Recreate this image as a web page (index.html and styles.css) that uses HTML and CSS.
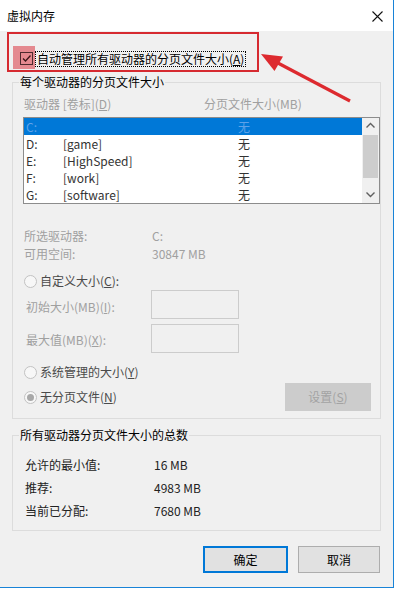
FILE: index.html
```html
<!DOCTYPE html>
<html lang="zh-CN">
<head>
<meta charset="utf-8">
<title>虚拟内存</title>
<link rel="stylesheet" href="styles.css">
</head>
<body>
<div class="window">
  <div class="titlebar">
    <span class="title">虚拟内存</span>
    <svg class="close" width="11" height="11" viewBox="0 0 11 11"><path d="M0.5 0.5L10.5 10.5M10.5 0.5L0.5 10.5" stroke="#111" stroke-width="1.1" fill="none"/></svg>
  </div>
  <div class="content">
    <div class="auto-box">
      <span class="cb-highlight"><span class="checkbox"><svg width="11" height="11" viewBox="0 0 11 11"><path d="M2 5.5L4.5 8L9.5 2.5" stroke="#3a1517" stroke-width="1.3" fill="none"/></svg></span></span>
      <span class="focus-label">自动管理所有驱动器的分页文件大小(<u>A</u>)</span>
    </div>

    <fieldset class="group group-drives">
      <legend>每个驱动器的分页文件大小</legend>
      <div class="group-body">
        <div class="col-headers"><span class="col-drive">驱动器 [卷标](<u>D</u>)</span><span>分页文件大小(MB)</span></div>
        <div class="listbox">
          <div class="rows">
            <div class="row selected"><span class="c-drive">C:</span><span class="c-label"></span><span class="c-size">无</span></div>
            <div class="row"><span class="c-drive">D:</span><span class="c-label">[game]</span><span class="c-size">无</span></div>
            <div class="row"><span class="c-drive">E:</span><span class="c-label">[HighSpeed]</span><span class="c-size">无</span></div>
            <div class="row"><span class="c-drive">F:</span><span class="c-label">[work]</span><span class="c-size">无</span></div>
            <div class="row"><span class="c-drive">G:</span><span class="c-label">[software]</span><span class="c-size">无</span></div>
          </div>
          <div class="scrollbar">
            <svg class="sb-btn" width="17" height="17" viewBox="0 0 17 17"><path d="M4.5 9.5L8.5 5.5L12.5 9.5" stroke="#606060" stroke-width="1.4" fill="none"/></svg>
            <div class="sb-track"><div class="sb-thumb"></div></div>
            <svg class="sb-btn" width="17" height="17" viewBox="0 0 17 17"><path d="M4.5 6.5L8.5 10.5L12.5 6.5" stroke="#606060" stroke-width="1.4" fill="none"/></svg>
          </div>
        </div>

        <div class="info-row first"><span class="info-label">所选驱动器:</span><span>C:</span></div>
        <div class="info-row"><span class="info-label">可用空间:</span><span>30847 MB</span></div>

        <div class="radio-row r-custom"><span class="radio"></span><span class="radio-text">自定义大小(<u>C</u>):</span></div>
        <div class="field-row f-init"><span class="field-label">初始大小(MB)(<u>I</u>):</span><span class="textbox"></span></div>
        <div class="field-row f-max"><span class="field-label">最大值(MB)(<u>X</u>):</span><span class="textbox"></span></div>
        <div class="radio-row r-system"><span class="radio"></span><span class="radio-text">系统管理的大小(<u>Y</u>)</span></div>
        <div class="radio-row r-none"><span class="radio checked"></span><span class="radio-text">无分页文件(<u>N</u>)</span><span class="btn-set">设置(<u>S</u>)</span></div>
      </div>
    </fieldset>

    <fieldset class="group group-total">
      <legend>所有驱动器分页文件大小的总数</legend>
      <div class="group-body total-body">
        <div class="total-row"><span class="total-label">允许的最小值:</span><span>16 MB</span></div>
        <div class="total-row"><span class="total-label">推荐:</span><span>4983 MB</span></div>
        <div class="total-row"><span class="total-label">当前已分配:</span><span>7680 MB</span></div>
      </div>
    </fieldset>

    <div class="buttons">
      <span class="btn btn-ok">确定</span>
      <span class="btn btn-cancel">取消</span>
    </div>
  </div>

  <svg class="arrow" width="394" height="120" viewBox="0 0 394 120">
    <path d="M276 62L350 101" stroke="#dd2a2f" stroke-width="3.2" fill="none"/>
    <path d="M261 54L283 56.5L274.5 71Z" fill="#dd2a2f"/>
  </svg>
</div>
</body>
</html>
```

FILE: styles.css
```css
* { box-sizing: border-box; }
html, body { margin: 0; padding: 0; background: #fff; }
body {
  font-family: "Noto Sans CJK SC", "Noto Sans", sans-serif;
  font-size: 12px;
  color: #000;
  width: 396px;
  height: 589px;
  overflow: hidden;
}
u { text-decoration: underline; text-underline-offset: 1px; }

.window {
  position: relative;
  width: 394px;
  height: 588px;
  border-right: 1px solid #1883d7;
  border-bottom: 1px solid #1883d7;
  display: flex;
  flex-direction: column;
}
.titlebar {
  height: 31px;
  flex: none;
  background: #fff;
  display: flex;
  align-items: center;
  justify-content: space-between;
  padding: 1px 10px 0 7px;
}
.title { line-height: 16px; color: #000; }
.close { display: block; }

.content {
  flex: 1;
  background: #f0f0f0;
  display: flex;
  flex-direction: column;
  padding-top: 1px;
}

.auto-box {
  margin-left: 7px;
  width: 252px;
  height: 40px;
  border: 2px solid #d62a30;
  display: flex;
  align-items: flex-start;
  padding: 12px 0 0 4px;
}
.cb-highlight {
  width: 22px;
  height: 23px;
  background: #e4898f;
  padding: 6px 0 0 7px;
}
.checkbox {
  display: block;
  width: 13px;
  height: 13px;
  border: 1px solid #4d2a2d;
}
.checkbox svg { display: block; }
.focus-label {
  margin-top: 5px;
  height: 16px;
  line-height: 14px;
  border: 1px dotted #000;
  padding: 0 1px;
  white-space: nowrap;
}

.group {
  margin: 0 0 0 12px;
  width: 369px;
  border: 1px solid #dcdcdc;
  padding: 0;
  min-width: 0;
}
.group legend {
  margin-left: 6px;
  padding: 0 1px;
  line-height: 16px;
  color: #000;
}
.group-drives { margin-top: 2px; }
.group-body {
  display: flex;
  flex-direction: column;
  padding: 6px 0 7px 10px;
}

.col-headers {
  display: flex;
  line-height: 16px;
  color: #a0a0a0;
}
.col-drive { width: 181px; padding-left: 1px; }

.listbox {
  margin-top: 5px;
  width: 357px;
  height: 87px;
  border: 1px solid #8c8c8c;
  background: #fff;
  display: flex;
}
.rows { width: 338px; }
.row {
  display: flex;
  height: 17px;
  line-height: 17px;
  color: #333;
}
.row.selected { background: #0078d7; color: #5fa2e8; }
.c-drive { width: 39px; padding-left: 2px; }
.c-label { width: 175px; }
.scrollbar {
  width: 17px;
  background: #f0f0f0;
  display: flex;
  flex-direction: column;
}
.sb-btn { display: block; flex: none; }
.sb-track { flex: 1; padding: 0 1px; }
.sb-thumb { height: 43px; background: #cdcdcd; }

.info-row {
  display: flex;
  height: 18px;
  line-height: 18px;
  color: #a0a0a0;
}
.info-row.first { margin-top: 23px; }
.info-label { width: 129px; padding-left: 1px; }

.radio-row {
  display: flex;
  align-items: center;
  height: 16px;
  line-height: 16px;
}
.radio {
  width: 13px;
  height: 13px;
  margin-left: 1px;
  margin-right: 3px;
  border: 1px solid #c2c2c2;
  border-radius: 50%;
  background: #f7f7f7;
  display: flex;
  align-items: center;
  justify-content: center;
}
.radio.checked::after {
  content: "";
  width: 7px;
  height: 7px;
  border-radius: 50%;
  background: #a8a8a8;
}
.radio-text { color: #4a4a4a; }
.r-custom { margin-top: 10px; }
.r-system { margin-top: 11px; }
.r-none { margin-top: 3px; height: 28px; }

.field-row {
  display: flex;
  align-items: flex-start;
  height: 29px;
}
.f-init { margin-top: 1px; }
.f-max { margin-top: 5px; }
.field-label {
  width: 128px;
  padding-left: 3px;
  line-height: 16px;
  color: #a0a0a0;
}
.f-init .field-label { margin-top: 9px; }
.f-max .field-label { margin-top: 8px; }
.textbox {
  width: 88px;
  height: 29px;
  border: 1px solid #cccccc;
  background: #f0f0f0;
}

.btn-set {
  margin-left: auto;
  margin-right: 9px;
  width: 86px;
  height: 28px;
  background: #cccccc;
  color: #a3a3a3;
  display: flex;
  align-items: center;
  justify-content: center;
}

.group-total { margin-top: 8px; }
.total-body { padding: 10px 0 8px 12px; }
.total-row {
  display: flex;
  height: 23px;
  line-height: 23px;
  color: #222;
}
.total-label { width: 129px; }

.buttons {
  display: flex;
  margin-top: 15px;
  padding-left: 203px;
  gap: 10px;
}
.btn {
  height: 27px;
  background: #e1e1e1;
  border: 1px solid #adadad;
  display: flex;
  align-items: center;
  justify-content: center;
  color: #000;
}
.btn-ok { width: 85px; border: 2px solid #0078d7; }
.btn-cancel { width: 82px; }

.arrow {
  position: absolute;
  left: 0;
  top: 0;
  pointer-events: none;
}
```
